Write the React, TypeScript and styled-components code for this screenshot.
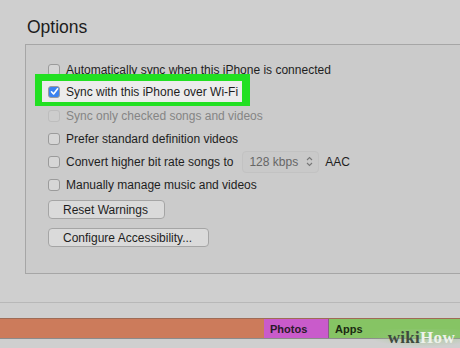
import React from "react";
import styled, { createGlobalStyle } from "styled-components";

const GlobalStyle = createGlobalStyle`
  html, body {
    margin: 0;
    padding: 0;
    background: #cfcfcf;
    overflow: hidden;
  }
  body {
    font-family: "Liberation Sans", Arial, sans-serif;
    color: #1e1e1e;
  }
`;

const Page = styled.div`
  position: relative;
  width: 460px;
  height: 348px;
  overflow: hidden;
  background: #cfcfcf;
  display: flex;
  flex-direction: column;
`;

const Title = styled.h2`
  margin: 0;
  padding: 17px 0 0 27px;
  font-size: 17.5px;
  font-weight: 400;
  line-height: 20px;
  color: #1c1c1c;
`;

const Panel = styled.div`
  margin: 7px -40px 0 25px;
  height: 230px;
  box-sizing: border-box;
  border: 1px solid #a6a6a6;
  background: #cbcbcb;
  padding: 13px 0 0 22px;
  display: flex;
  flex-direction: column;
`;

const Row = styled.div`
  display: flex;
  align-items: center;
  height: 23px;
  gap: 5px;
  font-size: 12px;
  color: ${(p) => (p.$dim ? "#858585" : "#1e1e1e")};
`;

const Highlight = styled.div`
  position: relative;
  margin: -7px 0 -2px -13px;
  align-self: flex-start;
  background: #22e022;
  padding: 7px 8px 4px 7px;
`;

const HighlightInner = styled(Row)`
  background: #ececec;
  height: 21px;
  padding: 0 4px 0 6px;
`;

const Box = styled.span`
  width: 12px;
  height: 12px;
  box-sizing: border-box;
  border-radius: 3px;
  border: 1px solid ${(p) => (p.$dim ? "#bdbdbd" : "#9b9b9b")};
  background: ${(p) => (p.$checked ? "#3b82f0" : p.$dim ? "#cdcdcd" : "#d6d6d6")};
  display: flex;
  align-items: center;
  justify-content: center;
  margin-right: 1px;
`;

const Popup = styled.span`
  display: inline-flex;
  align-items: center;
  gap: 8px;
  margin: 0 1px 0 4px;
  height: 20px;
  padding: 0 5px 0 6px;
  border: 1px solid #c2c2c2;
  border-radius: 4px;
  background: #c9c9c9;
  color: #666;
`;

const Button = styled.button`
  align-self: flex-start;
  margin: ${(p) => p.$top}px 0 0 0;
  height: 19px;
  padding: 0 16px 0 14px;
  border: 1px solid #a5a5a5;
  border-radius: 4px;
  background: #dadada;
  font-family: inherit;
  font-size: 12px;
  color: #1e1e1e;
`;

const Divider = styled.div`
  margin-top: 28px;
  height: 1px;
  background: #b8b8b8;
`;

const Bar = styled.div`
  margin-top: 15px;
  height: 19px;
  display: flex;
  border-top: 1px solid #9f6b55;
  border-bottom: 1px solid #8c8c8c;
`;

const Segment = styled.div`
  width: ${(p) => p.$w}px;
  flex: ${(p) => (p.$grow ? 1 : "none")};
  background: ${(p) => p.$bg};
  border-right: ${(p) => (p.$edge ? "1px solid #8a5a8a" : "none")};
  font-size: 11px;
  font-weight: 700;
  color: ${(p) => p.$ink || "#2a1a2a"};
  display: flex;
  align-items: center;
  padding-left: 6px;
  box-sizing: border-box;
`;

const Watermark = styled.div`
  position: absolute;
  right: 0;
  bottom: 1px;
  padding: 0 5px 0 20px;
  background: radial-gradient(ellipse at 60% 40%, rgba(150, 200, 130, 0.7), rgba(150, 200, 130, 0) 70%);
  font-family: "Liberation Serif", serif;
  font-weight: 700;
  font-size: 17px;
  line-height: 18px;
  letter-spacing: 0.3px;
  color: #3e4a3e;
  & b {
    color: #eef2ec;
  }
`;

const Check = () => (
  <svg width="9" height="9" viewBox="0 0 9 9">
    <path d="M1.5 4.8 L3.6 7 L7.6 1.8" fill="none" stroke="#fff" strokeWidth="1.6" strokeLinecap="round" strokeLinejoin="round" />
  </svg>
);

const Chevrons = () => (
  <svg width="7" height="11" viewBox="0 0 7 11">
    <path d="M1 4 L3.5 1.5 L6 4 M1 7 L3.5 9.5 L6 7" fill="none" stroke="#777" strokeWidth="1.1" />
  </svg>
);

export default function App() {
  return (
    <Page>
      <GlobalStyle />
      <Title>Options</Title>
      <Panel>
        <Row>
          <Box />
          Automatically sync when this iPhone is connected
        </Row>
        <Highlight>
          <HighlightInner>
            <Box $checked>
              <Check />
            </Box>
            Sync with this iPhone over Wi-Fi
          </HighlightInner>
        </Highlight>
        <Row $dim>
          <Box $dim />
          Sync only checked songs and videos
        </Row>
        <Row>
          <Box />
          Prefer standard definition videos
        </Row>
        <Row>
          <Box />
          Convert higher bit rate songs to
          <Popup>
            128 kbps
            <Chevrons />
          </Popup>
          AAC
        </Row>
        <Row>
          <Box />
          Manually manage music and videos
        </Row>
        <Button $top={4}>Reset Warnings</Button>
        <Button $top={9}>Configure Accessibility...</Button>
      </Panel>
      <Divider />
      <Bar>
        <Segment $w={264} $bg="#cc7b5b" />
        <Segment $w={65} $bg="#c95bcb" $edge>
          Photos
        </Segment>
        <Segment $grow $bg="#86c464" $ink="#1b2a12">
          Apps
        </Segment>
      </Bar>
      <Watermark>
        wiki<b>How</b>
      </Watermark>
    </Page>
  );
}
